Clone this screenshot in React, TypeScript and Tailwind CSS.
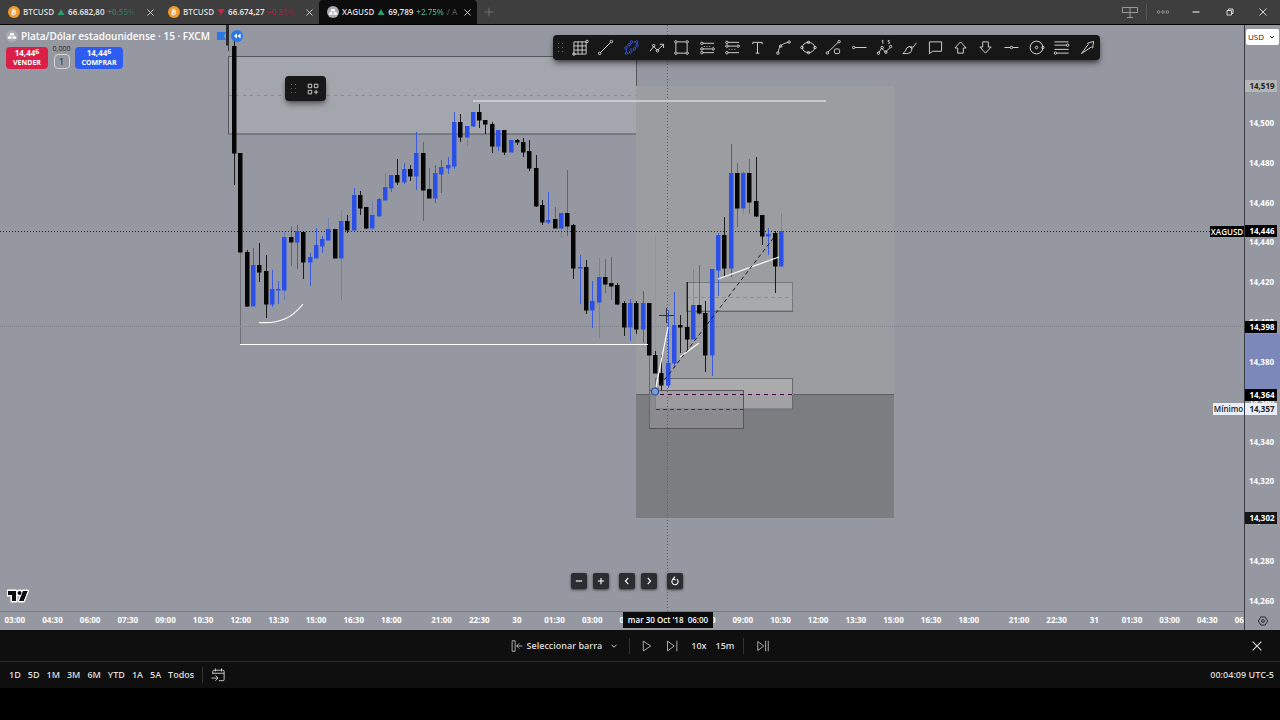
import { Fragment, type ReactNode } from "react";

type Candle = [top: number, bottom: number, high: number, low: number, up: 0 | 1];

const FIRST_BAR_X = 227.8;
const BAR_STEP = 6.285;
const CHART_TOP = 25;

const candles: Candle[] = [
    [25, 45, 25, 51, 0], [46, 153, 41, 185, 0], [153, 252, 153, 252, 0], [252, 306, 250, 307, 0],
    [265, 306, 248, 306, 1], [265, 272, 243, 282, 0], [271, 304, 255, 318, 0], [289, 304, 270, 307, 1],
    [289, 290, 281, 304, 1], [237, 290, 232, 300, 1], [237, 242, 226, 266, 0], [231, 242, 225, 269, 1],
    [232, 262, 231, 279, 0], [257, 262, 253, 286, 1], [245, 258, 228, 258, 1], [239, 246, 236, 253, 1],
    [229, 240, 218, 240, 1], [229, 258, 229, 258, 0], [221, 258, 210, 300, 1], [221, 230, 215, 233, 0],
    [195, 230, 188, 230, 1], [195, 208, 191, 215, 0], [207, 228, 207, 229, 0], [215, 228, 201, 230, 1],
    [199, 216, 198, 216, 1], [187, 200, 173, 201, 1], [175, 188, 175, 192, 1], [175, 182, 159, 185, 0],
    [169, 182, 163, 184, 1], [169, 176, 165, 181, 0], [153, 176, 132, 190, 1], [153, 190, 142, 221, 0],
    [189, 198, 168, 198, 0], [173, 198, 165, 203, 1], [167, 174, 160, 193, 1], [165, 168, 157, 174, 1],
    [122, 166, 112, 169, 1], [122, 137, 114, 142, 0], [126, 137, 126, 146, 1], [112, 126, 112, 127, 1],
    [112, 120, 104, 128, 0], [120, 124, 120, 134, 0], [124, 146, 122, 153, 0], [130, 146, 130, 151, 1],
    [130, 152, 130, 155, 0], [140, 152, 140, 152, 1], [140, 142, 139, 145, 0], [142, 152, 138, 157, 0],
    [151, 168, 140, 171, 0], [168, 206, 155, 207, 0], [205, 222, 200, 225, 0], [220, 222, 192, 224, 1],
    [219, 228, 207, 228, 0], [213, 228, 213, 238, 1], [213, 226, 170, 236, 0], [225, 268, 224, 279, 0],
    [267, 268, 255, 304, 1], [267, 310, 260, 314, 0], [301, 310, 281, 328, 1], [277, 302, 258, 338, 1],
    [277, 284, 259, 293, 0], [283, 286, 257, 300, 0], [285, 304, 283, 305, 0], [303, 327, 301, 336, 0],
    [303, 327, 299, 341, 1], [303, 329, 301, 334, 0], [303, 329, 291, 343, 1], [303, 355, 303, 355, 0],
    [355, 373, 351, 373, 0], [373, 385, 355, 390, 0], [363, 385, 310, 388, 1], [325, 363, 292, 368, 1],
    [325, 327, 315, 353, 0], [327, 339, 282, 350, 0], [305, 339, 269, 340, 1], [305, 313, 265, 315, 0],
    [313, 355, 301, 372, 0], [269, 355, 269, 376, 1], [235, 270, 233, 296, 1], [235, 268, 217, 277, 0],
    [173, 268, 144, 277, 1], [173, 208, 163, 227, 0], [173, 208, 171, 214, 1], [173, 202, 159, 214, 0],
    [201, 216, 157, 217, 0], [215, 236, 215, 245, 0], [234, 236, 228, 255, 1], [233, 266, 231, 293, 0],
    [231, 266, 213, 267, 1],
];

// bars whose wicks are drawn translucent
const softWicks = [9, 10, 16, 18, 23, 25, 31, 32, 38, 52, 53, 54, 59, 60, 61, 74, 75, 81, 82, 83, 88];

const prices = [
    "14,520", "14,500", "14,480", "14,460", "14,440", "14,420", "14,400",
    "14,380", "14,360", "14,340", "14,320", "14,300", "14,280", "14,260",
];

// an empty label is the slot that the crosshair date covers
const sessions = [
    ["03:00", "04:30", "06:00", "07:30", "09:00", "10:30", "12:00", "13:30", "15:00", "16:30", "18:00"],
    ["21:00", "22:30", "30", "01:30", "03:00", "04:30", "", "07:30", "09:00", "10:30", "12:00", "13:30", "15:00", "16:30", "18:00"],
    ["21:00", "22:30", "31", "01:30", "03:00", "04:30", "06:00"],
];

const ranges = ["1D", "5D", "1M", "3M", "6M", "YTD", "1A", "5A", "Todos"];

export default function App() {
    return (
        <div className="flex min-h-screen flex-col bg-black font-['Open_Sans','Noto_Sans',sans-serif] text-[10px] text-[#dbdbdb]">
            <TitleBar />
            <main className="flex flex-1 bg-[#9698a1]">
                <div className="flex min-w-0 flex-1 flex-col">
                    <Chart />
                    <TimeAxis />
                </div>
                <PriceAxis />
            </main>
            <ReplayBar />
            <RangeBar />
            <div className="h-8" />
        </div>
    );
}

function TitleBar() {
    return (
        <header className="flex h-[25px] items-stretch border-b border-black bg-[#3e3e3e] text-[8px] font-semibold">
            <Tab width="w-40" symbol="BTCUSD" price="66.682,80" change="+0.55%" up icon={<Bitcoin />} />
            <Tab width="w-[159px]" symbol="BTCUSD" price="66.674,27" change="−0.31%" icon={<Bitcoin />} />
            <Tab width="w-[158px]" symbol="XAGUSD" price="69,789" change="+2.75%" up active extra="/ A" icon={<Silver className="size-3" />} />
            <button aria-label="Nueva pestaña" className="px-[7px] text-[#8a8a8a]">
                <Icon className="size-2.5"><path d="M8 1v14M1 8h14" /></Icon>
            </button>
            <div className="ml-auto flex items-center text-[#d5d5d5]">
                <button aria-label="Disposición" className="px-2 text-[#999]">
                    <Icon><path d="M.5 3.500h15v5h-15zM8 3.500v10M5 13.500h6" /></Icon>
                </button>
                <span className="h-4 w-px bg-[#555]" />
                <button aria-label="Más" className="grid w-8 place-items-center text-[#999]">
                    <Icon className="size-3.5"><circle cx="3" cy="8" r="1.500" /><circle cx="8" cy="8" r="1.500" /><circle cx="13" cy="8" r="1.500" /></Icon>
                </button>
                <button aria-label="Minimizar" className="grid w-[34px] place-items-center">
                    <Icon className="size-2"><path d="M1 8h14" strokeWidth="2.500" /></Icon>
                </button>
                <button aria-label="Restaurar" className="grid w-[33px] place-items-center">
                    <Icon className="size-2"><path d="M2 5h9v9H2zM5 5V2h9v9h-3" strokeWidth="2" /></Icon>
                </button>
                <button aria-label="Cerrar" className="grid w-[34px] place-items-center">
                    <Icon className="size-2"><path d="M1 1l14 14M15 1L1 15" strokeWidth="2" /></Icon>
                </button>
            </div>
        </header>
    );
}

type TabProps = {
    width: string;
    symbol: string;
    price: string;
    change: string;
    icon: ReactNode;
    up?: boolean;
    active?: boolean;
    extra?: string;
}

function Tab({ width, symbol, price, change, icon, up, active, extra }: TabProps) {
    return (
        <div className={`${width} flex items-center gap-0.5 pl-2 pr-1 ${active ? "rounded-t bg-[#0d0d0d]" : ""}`}>
            <button className="flex min-w-0 flex-1 items-center gap-[3px] whitespace-nowrap">
                {icon}
                <span>{symbol}</span>
                <svg viewBox="0 0 8 8" className={`size-2 shrink-0 ${up ? "text-[#2f9e6e]" : "text-[#d12245]"}`} fill="currentColor">
                    <path d={up ? "M4 1l3.500 6h-7z" : "M4 7l3.500-6h-7z"} />
                </svg>
                <span className="text-[#e8e8e8]">{price}</span>
                <span className={`bg-gradient-to-r bg-clip-text text-transparent ${!up ? "from-[#c82545] to-[#6a2e38]" : active ? "from-[#43a780] to-[#43a780]" : "from-[#34936b] to-[#39594c]"}`}>{change}</span>
                {extra && <span className="text-[#555]">{extra}</span>}
            </button>
            <button aria-label="Cerrar pestaña" className="grid size-3 place-items-center">
                <Icon className="size-[7px]"><path d="M1 1l14 14M15 1L1 15" strokeWidth="2" /></Icon>
            </button>
        </div>
    );
}

function Chart() {
    return (
        <section className="relative flex flex-1 flex-col overflow-hidden border-b border-[#777983]">
            <svg className="absolute inset-0 h-full w-full">
                <g transform={`translate(0 -${CHART_TOP})`}>
                    <ChartZones />
                    <line x1="0" x2="100%" y1="231.500" y2="231.500" stroke="#222" strokeDasharray="1 2" />
                    <line x1="0" x2="100%" y1="326.500" y2="326.500" stroke="#82848d" strokeDasharray="1 1" />
                    <line x1="667.500" x2="667.500" y1="25" y2="611" stroke="#5f6067" strokeDasharray="1 2" />
                    <Candles />
                    <Drawings />
                </g>
            </svg>

            <div className="relative flex flex-col items-start px-1.5 pt-1">
                <div className="flex items-center gap-[3px] text-[10px] leading-[14px] font-semibold text-white">
                    <Silver className="size-3" />
                    <h1>Plata/Dólar estadounidense · 15 · FXCM</h1>
                    <svg viewBox="0 0 9 8" className="ml-1 h-2 w-[9px]"><path d="M0 0h9L7 4l2 4H0z" fill="#2a78e4" /></svg>
                    <button aria-label="Ir al inicio" className="ml-0.5 grid size-3 place-items-center rounded-full bg-[#2878e8]">
                        <svg viewBox="0 0 10 10" className="size-2" fill="#fff"><path d="M5 2v6L1 5zM9.500 2v6l-4-3z" /></svg>
                    </button>
                </div>
                <div className="mt-1 flex items-stretch gap-1.5">
                    <button className="w-[42px] rounded bg-[#da1f48] py-px text-[7px] leading-[10px] font-bold text-white">
                        <span className="block text-[8px]">14,44<sup className="top-[-2px] text-[7px] leading-none">6</sup></span>
                        <span className="block">VENDER</span>
                    </button>
                    <div className="-mt-1 flex w-[15px] flex-col items-center text-[#222]">
                        <span className="text-[7px] leading-[11px]">0,000</span>
                        <button aria-label="Cantidad" className="h-[15px] w-4 rounded border border-[#d4d5d9] text-[9px] leading-3">1</button>
                    </div>
                    <button className="w-12 rounded bg-[#2f5cf0] py-px text-[7px] leading-[10px] font-bold text-white">
                        <span className="block text-[8px]">14,44<sup className="top-[-2px] text-[7px] leading-none">6</sup></span>
                        <span className="block">COMPRAR</span>
                    </button>
                </div>
            </div>

            <div className="absolute top-[51px] left-[285px] flex h-[25px] w-[41px] items-center justify-between rounded bg-[#181818] pr-1.5 pl-1.5 shadow-md shadow-black/40">
                <Handle />
                <button aria-label="Plantillas" className="text-[#ddd]">
                    <Icon className="size-3.5"><path d="M2.500 2.500h4v4h-4zM9.500 2.500h4v4h-4zM2.500 9.500h4v4h-4zM11.500 9v5M9 11.500h5" /></Icon>
                </button>
            </div>

            <DrawingToolbar />

            <div className="relative mt-auto flex items-end pb-2 pl-[7px]">
                <Logo />
            </div>
            <div className="absolute bottom-[22px] left-[571px] flex gap-2.5">
                <div className="flex gap-1.5">
                    <NavButton label="Alejar" path="M3 8h10" />
                    <NavButton label="Acercar" path="M8 3v10M3 8h10" />
                </div>
                <div className="flex gap-1.5">
                    <NavButton label="Izquierda" path="M10 3L5.500 8l4.500 5" />
                    <NavButton label="Derecha" path="M6 3l4.500 5L6 13" />
                </div>
                <NavButton label="Restablecer" path="M5 5a5 5 0 1 0 6 0M8 1L5 4.500l4 2" />
            </div>
            <span className="absolute top-[201px] right-0 h-[11px] w-[34px] bg-black text-center text-[8px] leading-[11px] font-semibold text-white">XAGUSD</span>
            <span className="absolute top-[378px] right-0 h-3 w-[31px] bg-[#e9eef9] text-center text-[8px] leading-3 font-semibold text-[#222]">Mínimo</span>
        </section>
    );
}

function ChartZones() {
    return (
        <>
            <rect x="228.500" y="56.500" width="408" height="77.500" fill="#a4a6ad" stroke="#55575d" />
            <path d="M229 95.500H636" stroke="#8a8994" strokeDasharray="3 4" />
            <rect x="636" y="86" width="258" height="308" fill="#9c9da0" />
            <rect x="636" y="394" width="258" height="124" fill="#7c7d81" />
            <path d="M636 394.500H894" stroke="#606165" />
            <path d="M240.500 252V345" stroke="#6f7077" />
            <path d="M655.500 235V355" stroke="#949599" />
            <rect x="686.500" y="282.500" width="106" height="28.500" fill="#a8a9ab" stroke="#77787b" />
            <path d="M686.500 282V311.500H793" stroke="#666" fill="none" />
            <path d="M687 297.500H793" stroke="#909093" strokeDasharray="4 3" />
            <rect x="655.500" y="378.500" width="137" height="30.500" fill="#b0b0b2" fillOpacity=".75" stroke="#67686b" />
            <rect x="649.500" y="390.500" width="94" height="38" fill="#97989b" fillOpacity=".55" stroke="#55565a" />
            <path d="M649.500 355V428" stroke="#66676b" />
            <path d="M656 409.500H743" stroke="#3a3a3c" strokeDasharray="4 3" />
            <path d="M656 394.500H793" stroke="#c88fca" />
            <path d="M660 394.500H793" stroke="#281628" strokeDasharray="4 4" />
        </>
    );
}

function Candles() {
    return (
        <>
            {candles.map(([top, bottom, high, low, up], i) => {
                const x = Math.round(FIRST_BAR_X + BAR_STEP * i);
                const color = i === 0 ? "#2b2c30" : up ? "#2a50e8" : "#050505";
                return (
                    <g key={i} fill={color}>
                        <rect x={x} y={high} width="1" height={low - high} opacity={softWicks.includes(i) ? 0.35 : 0.85} />
                        <rect x={x - 2} y={top} width={i === 0 ? 3 : 4.5} height={bottom - top + 0.5} />
                    </g>
                );
            })}
        </>
    );
}

function Drawings() {
    return (
        <g fill="none" stroke="#fff" strokeWidth="1.200">
            <path d="M473 101H826" stroke="#d6d7da" strokeWidth="1.500" />
            <path d="M240 344.500H648" />
            <path d="M259 322.500C280 324 292 318 303 304" />
            <path d="M656 387L668 327" />
            <path d="M680 357L699 343" />
            <path d="M718 279L779 257" />
            <path d="M656 391L775 236" stroke="#1c1c1c" strokeWidth="1" strokeDasharray="4 3" />
            <path d="M659 315.500h15M666.500 308v15" stroke="#333" strokeWidth="1" />
            <circle cx="655" cy="391.500" r="3.500" fill="#8698c8" stroke="#2452a8" />
        </g>
    );
}

const dot = (cx: number, cy: number) => <circle key={`${cx}-${cy}`} cx={cx} cy={cy} r="1.300" />;

const tools: { name: string; shape: ReactNode; active?: boolean }[] = [
    { name: "Rejilla", shape: <><path d="M1 2h13v13H1zM5.300 2v13M9.700 2v13M1 6.300h13M1 10.700h13" />{dot(15, 1.5)}{dot(1, 15)}</> },
    { name: "Línea de tendencia", shape: <><path d="M2.500 13.500l11-11" />{dot(1.7, 14.3)}{dot(14.3, 1.7)}</> },
    { name: "Pincel", active: true, shape: <><path d="M2.500 13V9.500M3 7.500L4 6M7 4.500L7.500 3.500M9.500 2H12M14 3V5M13 7L12 8.500M10.500 11L9 12M7.500 8.500V11.500M5.500 14H3.500" />{dot(2.5, 14)}{dot(2, 8.5)}{dot(5.5, 5)}{dot(8, 2)}{dot(13.5, 2)}{dot(14, 6)}{dot(11, 9.5)}{dot(7, 13)}</> },
    { name: "Trayectoria", shape: <><path d="M1 12l4-5 4 4 6-6M11.500 4.500H15.500V8.500" />{dot(5, 6)}{dot(9, 11.5)}</> },
    { name: "Rectángulo", shape: <><path d="M2 3.500v9M14 3.500v9M3.500 2h9M3.500 14h9" />{dot(2, 2)}{dot(14, 2)}{dot(2, 14)}{dot(14, 14)}</> },
    { name: "Posición larga", shape: <><path d="M3 3.500h12M3 9.500h9M3 13.500h12" /><path d="M4 7h9" strokeDasharray="1 2" />{dot(2, 3.5)}{dot(2, 9.5)}{dot(2, 13.5)}{dot(14, 9.5)}</> },
    { name: "Posición corta", shape: <><path d="M3 2.500h12M3 6.500h9M3 13.500h12" /><path d="M4 10h9" strokeDasharray="1 2" />{dot(2, 2.5)}{dot(2, 6.5)}{dot(2, 13.5)}{dot(14, 6.5)}</> },
    { name: "Texto", shape: <path d="M3 4.500V2.500h10v2M8 2.500V14M6 14h4" /> },
    { name: "Curva", shape: <><path d="M2.500 13C3 7 6 4 13 2.500" />{dot(2, 14)}{dot(5, 6.5)}{dot(14, 2.2)}</> },
    { name: "Elipse", shape: <><ellipse cx="8" cy="8" rx="6.500" ry="5.500" />{dot(8, 2.5)}{dot(8, 13.5)}{dot(1, 8)}{dot(15, 8)}</> },
    { name: "Línea con zona", shape: <><path d="M2 13L13 2.500" /><rect x="9" y="9.500" width="5.500" height="5" rx="1.500" />{dot(1.5, 13.8)}{dot(14, 1.8)}</> },
    { name: "Rayo horizontal", shape: <><path d="M3 8h12.500" />{dot(1.8, 8)}</> },
    { name: "Onda de Elliott", shape: <><path d="M2 13.500l3-5 4 4.500 4.500-4.500M5 1l1.200-.8V4M13.500 .5h-1.500V2c2-.3 2 2 0 1.800" />{dot(1.5, 14)}{dot(5.5, 8)}{dot(9.5, 13)}{dot(14.5, 7)}</> },
    { name: "Resaltador", shape: <path d="M1 14.500Q4 12 5 8.500Q8 5.500 10.500 8Q11 11 9 13.500Q5 15 1 14.500zM8 6.500L11 9.500M10 6.500L11.500 8L15.500 3" /> },
    { name: "Comentario", shape: <path d="M1.500 2h13v10H5L1.500 14.500z" /> },
    { name: "Flecha arriba", shape: <path d="M8 2l6 6.500h-3V14H5V8.500H2z" /> },
    { name: "Flecha abajo", shape: <path d="M8 14l6-6.500h-3V2H5v5.500H2z" /> },
    { name: "Línea horizontal", shape: <><path d="M.5 8h6M9.500 8h6" />{dot(8, 8)}</> },
    { name: "Círculo", shape: <><circle cx="8" cy="8" r="6.800" />{dot(8, 8)}{dot(14.8, 8)}</> },
    { name: "Retroceso", shape: <><path d="M.5 2h15M.5 5.500h13M.5 10h15M3 14h12.500" />{dot(14.5, 5.5)}{dot(1.5, 14)}</> },
    { name: "Flecha", shape: <path d="M1.500 14.500L9 4.500 8 3.500 14.500 1.500 13.500 8.500 12 7.500z" /> },
];

function DrawingToolbar() {
    return (
        <nav aria-label="Dibujo" className="absolute top-2.5 left-[553px] flex h-[25px] w-[547px] items-stretch rounded bg-[#171717] shadow-md shadow-black/50">
            <div className="flex w-[15px] items-center justify-center"><Handle /></div>
            {tools.map(({ name, shape, active }) => (
                <button key={name} aria-label={name} className={`grid flex-1 place-items-center ${active ? "text-[#3355d8]" : "text-[#d6d6d6]"}`}>
                    <Icon className="size-[15px]">{shape}</Icon>
                </button>
            ))}
        </nav>
    );
}

function NavButton({ label, path }: { label: string; path: string }) {
    return (
        <button aria-label={label} className="grid size-4 place-items-center rounded-xs bg-[#2c2d30] text-white shadow-sm shadow-black/50">
            <Icon className="size-2.5"><path d={path} strokeWidth="1.800" /></Icon>
        </button>
    );
}

function TimeAxis() {
    return (
        <div className="relative h-[18px] overflow-hidden text-[8px] leading-4 font-bold text-white">
            <div className="-mr-5 -ml-1 flex">
                {sessions.map((labels, i) => (
                    <Fragment key={i}>
                        {i > 0 && <span className="grow basis-0" />}
                        {labels.map((label) => (
                            <span key={label} className="min-w-0 grow-3 basis-0 text-center">{label}</span>
                        ))}
                    </Fragment>
                ))}
            </div>
            <span className="absolute top-0 left-[623px] h-4 w-[90px] bg-[#0c0c0c] text-center leading-4 font-semibold whitespace-pre">mar 30 Oct '18  06:00</span>
        </div>
    );
}

function PriceAxis() {
    return (
        <aside className="relative flex w-9 flex-col border-l border-[#3b3c42] text-[8px] leading-3 font-bold text-white">
            <div className="relative mx-px mt-1 mb-8">
                <select aria-label="Moneda" className="h-4 w-full appearance-none rounded-xs bg-white pl-0.5 text-[8px] font-normal text-[#222]">
                    <option>USD</option>
                </select>
                <svg viewBox="0 0 6 4" className="pointer-events-none absolute top-1.5 right-1 h-1 w-1.5" fill="none" stroke="#222"><path d="M1 1l2 2 2-2" /></svg>
            </div>
            <span className="absolute top-[309px] right-0 left-0 h-[55px] bg-[#7c88b9]" />
            <div className="relative flex flex-1 flex-col justify-between pr-0.5 pb-[3px] text-center">
                {prices.map((price) => <span key={price}>{price}</span>)}
            </div>
            <button aria-label="Ajustes" className="grid h-5 place-items-center pt-0.5 text-[#2b2c30]">
                <Icon className="size-2.5"><path d="M4.500 1.500h7L15.500 8l-4 6.500h-7L.5 8z" strokeWidth="1.600" /><circle cx="8" cy="8" r="2.300" strokeWidth="1.600" /></Icon>
            </button>
            <PriceTag className="top-[55px] bg-[#b4b5b7] text-[#222]">14,519</PriceTag>
            <PriceTag className="top-[200px] bg-black">14,446</PriceTag>
            <PriceTag className="top-[296px] bg-black">14,398</PriceTag>
            <PriceTag className="top-[364px] bg-black">14,364</PriceTag>
            <PriceTag className="top-[378px] bg-[#e9eef9] text-[#222]">14,357</PriceTag>
            <PriceTag className="top-[487px] bg-[#161616]">14,302</PriceTag>
        </aside>
    );
}

function PriceTag({ className, children }: { className: string; children: ReactNode }) {
    return <span className={`absolute left-0 h-3 w-8 pl-0.5 text-center ${className}`}>{children}</span>;
}

function ReplayBar() {
    return (
        <div className="relative flex h-8 items-center border-b border-[#2c2c2c] bg-[#0f0f0f] text-[9px] font-semibold">
            <div className="flex flex-1 items-center justify-center gap-[13px]">
                <button className="flex items-center gap-1">
                    <Icon className="size-3"><path d="M1.500 1v14h4V1zM15 8H7.500M11 4.500L7.500 8l3.500 3.500" /></Icon>
                    <span>Seleccionar barra</span>
                    <Icon className="ml-1 size-2"><path d="M3 5.500l5 5 5-5" strokeWidth="1.800" /></Icon>
                </button>
                <span className="-mx-0.5 h-4 w-px bg-[#333]" />
                <button aria-label="Reproducir"><Icon className="size-3"><path d="M3 1.500v13L13 8z" /></Icon></button>
                <button aria-label="Avanzar"><Icon className="size-3"><path d="M2 1.500v13L11 8zM14.500 1v14" /></Icon></button>
                <button>10x</button>
                <button className="-mx-1">15m</button>
                <span className="h-4 w-px bg-[#333]" />
                <button aria-label="Ir al tiempo real"><Icon className="size-3"><path d="M1 2v12l8-6zM11.500 1v14M15 1v14" /></Icon></button>
            </div>
            <button aria-label="Cerrar reproducción" className="absolute right-[18px]">
                <Icon className="size-2.5"><path d="M1 1l14 14M15 1L1 15" strokeWidth="1.800" /></Icon>
            </button>
        </div>
    );
}

function RangeBar() {
    return (
        <footer className="flex h-[26px] items-center bg-[#0f0f0f] pr-1.5 pl-[9px] text-[9px] font-semibold">
            <div className="flex gap-[7px]">
                {ranges.map((range) => <button key={range}>{range}</button>)}
            </div>
            <span className="mx-2 h-4 w-px bg-[#333]" />
            <button aria-label="Ir a la fecha">
                <Icon className="size-3.5"><path d="M2 7V4q0-1.500 1.500-1.500h10Q15 2.500 15 4v9q0 1.500-1.500 1.500H9M2 6h13M5 .5v3.500M12 .5v3.500M.5 11.500h7M5 8.500l3 3-3 3" /></Icon>
            </button>
            <button className="ml-auto">00:04:09 UTC-5</button>
        </footer>
    );
}

function Icon({ className = "size-4", children }: { className?: string; children: ReactNode }) {
    return (
        <svg viewBox="0 0 16 16" className={`${className} overflow-visible`} fill="none" stroke="currentColor" strokeWidth="1">
            {children}
        </svg>
    );
}

function Handle() {
    return (
        <svg viewBox="0 0 6 10" className="h-2.5 w-1.5" fill="#666">
            {[1, 5, 9].map((y) => <path key={y} d={`M0 ${y - 1}h1v1h-1zM4 ${y - 1}h1v1h-1z`} />)}
        </svg>
    );
}

function Bitcoin() {
    return (
        <svg viewBox="0 0 24 24" className="size-3 shrink-0">
            <circle cx="12" cy="12" r="12" fill="#ee9a2f" />
            <path d="M9 7l5 1c3 .8 2 4-.5 3.700L9 11M8.500 11.500l5 .8c3.500.8 2.500 4.700-.5 4.500L7 16M10 6L8 17M12.500 5.500l-.5 2M11 17l-.5 2" fill="none" stroke="#fff" strokeWidth="2" />
        </svg>
    );
}

function Silver({ className }: { className: string }) {
    return (
        <svg viewBox="0 0 24 24" className={`${className} shrink-0`}>
            <circle cx="12" cy="12" r="12" fill="#a9abb0" />
            <path d="M9 6h6l2 5H7zM5 12.500h5.500l1 5H3zM13.500 12.500H19l2 5h-8.500z" fill="#fff" />
        </svg>
    );
}

function Logo() {
    return (
        <svg viewBox="0 0 24 14" className="h-3.5 w-6" role="img" aria-label="TradingView">
            <g fill="#0c0c0c" stroke="#fff" strokeWidth="3" strokeLinejoin="round" paintOrder="stroke">
                <path d="M1 2h8v10H5V6H1zM16.500 12h-4.300L16 2h4.500z" />
                <circle cx="12.500" cy="4" r="2" />
            </g>
            <path d="M1 2h8v10H5V6H1zM16.500 12h-4.300L16 2h4.500z" fill="#0c0c0c" />
        </svg>
    );
}
